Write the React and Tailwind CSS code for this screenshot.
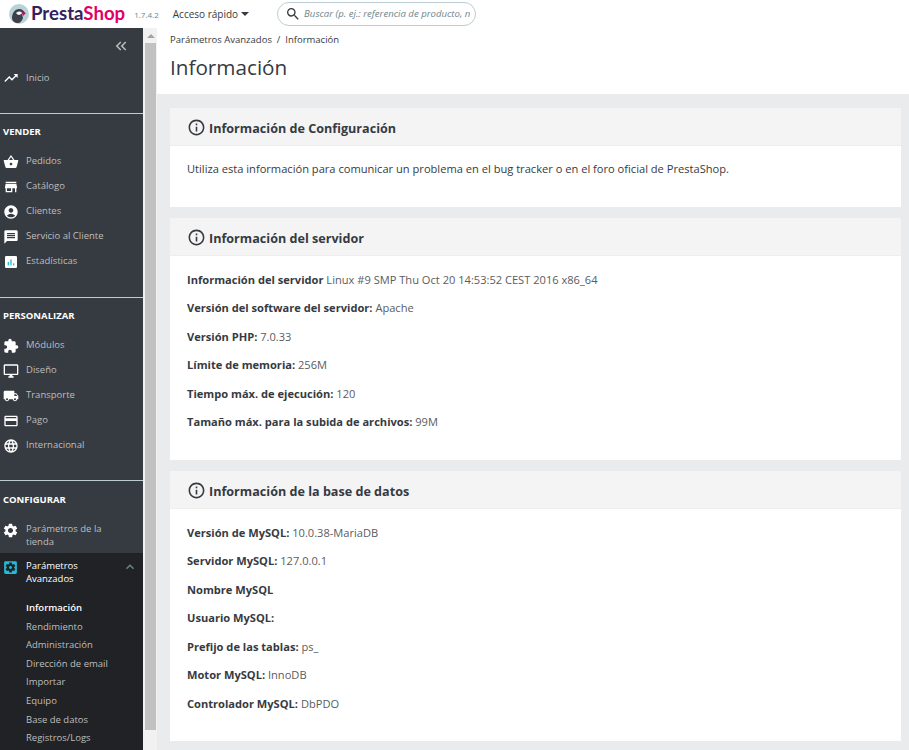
import {
  MdTrendingUp, MdShoppingBasket, MdStore, MdAccountCircle, MdMessage,
  MdExtension, MdOutlineDesktopWindows, MdLocalShipping, MdOutlineCreditCard, MdLanguage, MdSettings,
  MdSettingsApplications, MdInfoOutline, MdSearch, MdKeyboardDoubleArrowLeft, MdExpandLess,
} from 'react-icons/md';

const Logo = () => (
  <svg width="22" height="22" viewBox="0 0 22 22" className="shrink-0">
    <circle cx="11" cy="11" r="10" fill="#b7d3d8" />
    <path d="M4 15c0-5 3-9 7-9 3 0 5 2 6 4l-3 1 1 4c-1 3-3 5-5 5-3 0-6-2-6-5z" fill="#3d3f4a" />
    <path d="M8 10c2-2 5-2 6 0-1 2-4 3-6 0z" fill="#f4f4f4" />
    <path d="M14 9l4 1-3 3z" fill="#df0067" />
  </svg>
);

// white tile with coloured bars, the stock icon has none of these
const StatsIcon = ({ className }) => (
  <svg viewBox="0 0 24 24" className={className}>
    <rect x="3" y="3" width="18" height="18" rx="2" fill="#fff" />
    <rect x="7" y="12" width="2" height="5" fill="#25b9d7" />
    <rect x="11" y="8" width="2" height="9" fill="#25b9d7" />
    <rect x="15" y="14" width="2" height="3" fill="#25b9d7" />
  </svg>
);

const Section = ({ title, items }) => (
  <div className="mt-[22px] border-t border-[#bbcdd2]">
    <div className="mt-[10px] mb-[9px] h-[16px] pl-[3px] text-[9.5px] leading-[16px] font-bold text-white">{title}</div>
    {items.map(({ label, icon: Icon }) => (
      <div key={label} className="flex h-[25px] items-center">
        <Icon className="ml-[3px] mr-[7px] h-[16px] w-[16px] shrink-0 text-white" />
        <span className="text-[9.5px] text-[#bebebe]">{label}</span>
      </div>
    ))}
  </div>
);

const Sidebar = () => (
  <aside className="flex h-full w-[143px] shrink-0 flex-col overflow-hidden bg-[#363a41]">
    <div className="flex h-[35px] shrink-0 items-center justify-end pr-[13px]">
      <MdKeyboardDoubleArrowLeft className="h-[18px] w-[18px] text-[#bebebe]" />
    </div>
    <div className="flex h-[28px] shrink-0 items-center pt-[2px]">
      <MdTrendingUp className="ml-[3px] mr-[7px] h-[16px] w-[16px] text-white" />
      <span className="text-[9.5px] text-[#bebebe]">Inicio</span>
    </div>
    <Section
      title="VENDER"
      items={[
        { label: 'Pedidos', icon: MdShoppingBasket },
        { label: 'Catálogo', icon: MdStore },
        { label: 'Clientes', icon: MdAccountCircle },
        { label: 'Servicio al Cliente', icon: MdMessage },
        { label: 'Estadísticas', icon: StatsIcon },
      ]}
    />
    <div className="pt-px" />
    <Section
      title="PERSONALIZAR"
      items={[
        { label: 'Módulos', icon: MdExtension },
        { label: 'Diseño', icon: MdOutlineDesktopWindows },
        { label: 'Transporte', icon: MdLocalShipping },
        { label: 'Pago', icon: MdOutlineCreditCard },
        { label: 'Internacional', icon: MdLanguage },
      ]}
    />
    <div className="mt-[22px] border-t border-[#bbcdd2]">
      <div className="mt-[11px] mb-[9px] h-[16px] pl-[3px] text-[9.5px] leading-[16px] font-bold text-white">CONFIGURAR</div>
      <div className="flex h-[36px] items-start pt-[5px]">
        <MdSettings className="ml-[2px] mr-[7px] h-[17px] w-[17px] shrink-0 text-white" />
        <span className="text-[9.5px] leading-[13px] text-[#bebebe]">Parámetros de la<br />tienda</span>
      </div>
    </div>
    <div className="flex-1 bg-[#202226]">
      <div className="flex items-start pt-[6px]">
        <MdSettingsApplications className="ml-[2px] mr-[7px] h-[17px] w-[17px] shrink-0 text-[#25b9d7]" />
        <span className="flex-1 text-[9.5px] leading-[13px] text-white">Parámetros<br />Avanzados</span>
        <MdExpandLess className="mr-[5px] h-[16px] w-[16px] text-[#6c868e]" />
      </div>
      <div className="mt-[14px] pl-[26px] text-[9.5px] leading-[18.6px] text-[#bebebe]">
        <div className="font-semibold text-white">Información</div>
        <div>Rendimiento</div>
        <div>Administración</div>
        <div>Dirección de email</div>
        <div>Importar</div>
        <div>Equipo</div>
        <div>Base de datos</div>
        <div>Registros/Logs</div>
      </div>
    </div>
  </aside>
);

const Scrollbar = () => (
  <div className="flex h-full w-[14px] shrink-0 flex-col bg-[#f1f1f1] pr-[1px] pl-[2px]">
    <div className="flex h-[15px] items-center justify-center">
      <div className="h-0 w-0 border-x-[4px] border-b-[4px] border-x-transparent border-b-[#a3a3a3]" />
    </div>
    <div className="h-[687px] bg-[#c1c1c1]" />
  </div>
);

const Card = ({ title, children }) => (
  <section className="bg-white">
    <h3 className="flex h-[38px] items-center gap-[3px] border-b border-[#eeeeee] bg-[#f4f4f5] pt-[5px] pl-[17px] text-[12.6px] font-bold text-[#363a41]">
      <MdInfoOutline className="-mt-[3px] h-[19px] w-[19px] text-[#363a41]" />
      {title}
    </h3>
    {children}
  </section>
);

const Rows = ({ rows }) => (
  <div className="px-[17px] pt-[9.5px] text-[11.1px] leading-[28.5px] text-[#5a5c60]">
    {rows.map(([label, value]) => (
      <div key={label} className="h-[28.5px]">
        <b className="font-bold text-[#363a41]">{label}</b> {value}
      </div>
    ))}
  </div>
);

export default function App() {
  return (
    <div className="flex h-[750px] w-[909px] flex-col overflow-hidden bg-white font-['Open_Sans',sans-serif]">
      <header className="flex h-[28px] shrink-0 items-center bg-white">
        <div className="ml-[8px]"><Logo /></div>
        <span className="ml-[1px] font-['Lato',sans-serif] text-[18.6px] font-bold text-[#34215f]">
          Presta<span className="text-[#df0067]">Shop</span>
        </span>
        <span className="ml-[9px] mt-[2px] text-[8px] text-[#6c868e]">1.7.4.2</span>
        <span className="ml-[14px] text-[10px] text-[#363a41]">Acceso rápido</span>
        <div className="ml-[3px] h-0 w-0 border-x-[4px] border-t-[4px] border-x-transparent border-t-[#363a41]" />
        <div className="ml-[28px] flex h-[24px] w-[199px] items-center overflow-hidden rounded-full border border-[#bbcdd2] pr-[5px] pl-[7px]">
          <MdSearch className="h-[16px] w-[16px] shrink-0 text-[#363a41]" />
          <input
            readOnly
            placeholder="Buscar (p. ej.: referencia de producto, nombre de cliente...)"
            className="ml-[3px] min-w-0 flex-1 text-[9.6px] italic outline-none placeholder:text-[#6c868e]"
          />
        </div>
      </header>
      <div className="flex min-h-0 flex-1">
        <Sidebar />
        <Scrollbar />
        <main className="flex min-w-0 flex-1 flex-col bg-[#eaebec]">
          <div className="h-[66px] shrink-0 bg-white pl-[13px]">
            <div className="pt-[5px] text-[9.5px] leading-[14px] text-[#363a41]">Parámetros Avanzados&nbsp;&nbsp;/&nbsp;&nbsp;Información</div>
            <h1 className="mt-[6px] text-[20.7px] leading-[28px] text-[#363a41]">Información</h1>
          </div>
          <div className="flex flex-col gap-[11px] pt-[14px] pr-[8px] pl-[13px]">
            <Card title="Información de Configuración">
              <p className="h-[61px] px-[17px] pt-[15px] text-[11.12px] leading-[16px] text-[#363a41]">
                Utiliza esta información para comunicar un problema en el bug tracker o en el foro oficial de PrestaShop.
              </p>
            </Card>
            <Card title="Información del servidor">
              <div className="h-[204px]">
                <Rows
                  rows={[
                    ['Información del servidor', 'Linux #9 SMP Thu Oct 20 14:53:52 CEST 2016 x86_64'],
                    ['Versión del software del servidor:', 'Apache'],
                    ['Versión PHP:', '7.0.33'],
                    ['Límite de memoria:', '256M'],
                    ['Tiempo máx. de ejecución:', '120'],
                    ['Tamaño máx. para la subida de archivos:', '99M'],
                  ]}
                />
              </div>
            </Card>
            <Card title="Información de la base de datos">
              <div className="h-[232px]">
                <Rows
                  rows={[
                    ['Versión de MySQL:', '10.0.38-MariaDB'],
                    ['Servidor MySQL:', '127.0.0.1'],
                    ['Nombre MySQL', ''],
                    ['Usuario MySQL:', ''],
                    ['Prefijo de las tablas:', 'ps_'],
                    ['Motor MySQL:', 'InnoDB'],
                    ['Controlador MySQL:', 'DbPDO'],
                  ]}
                />
              </div>
            </Card>
          </div>
        </main>
      </div>
    </div>
  );
}
